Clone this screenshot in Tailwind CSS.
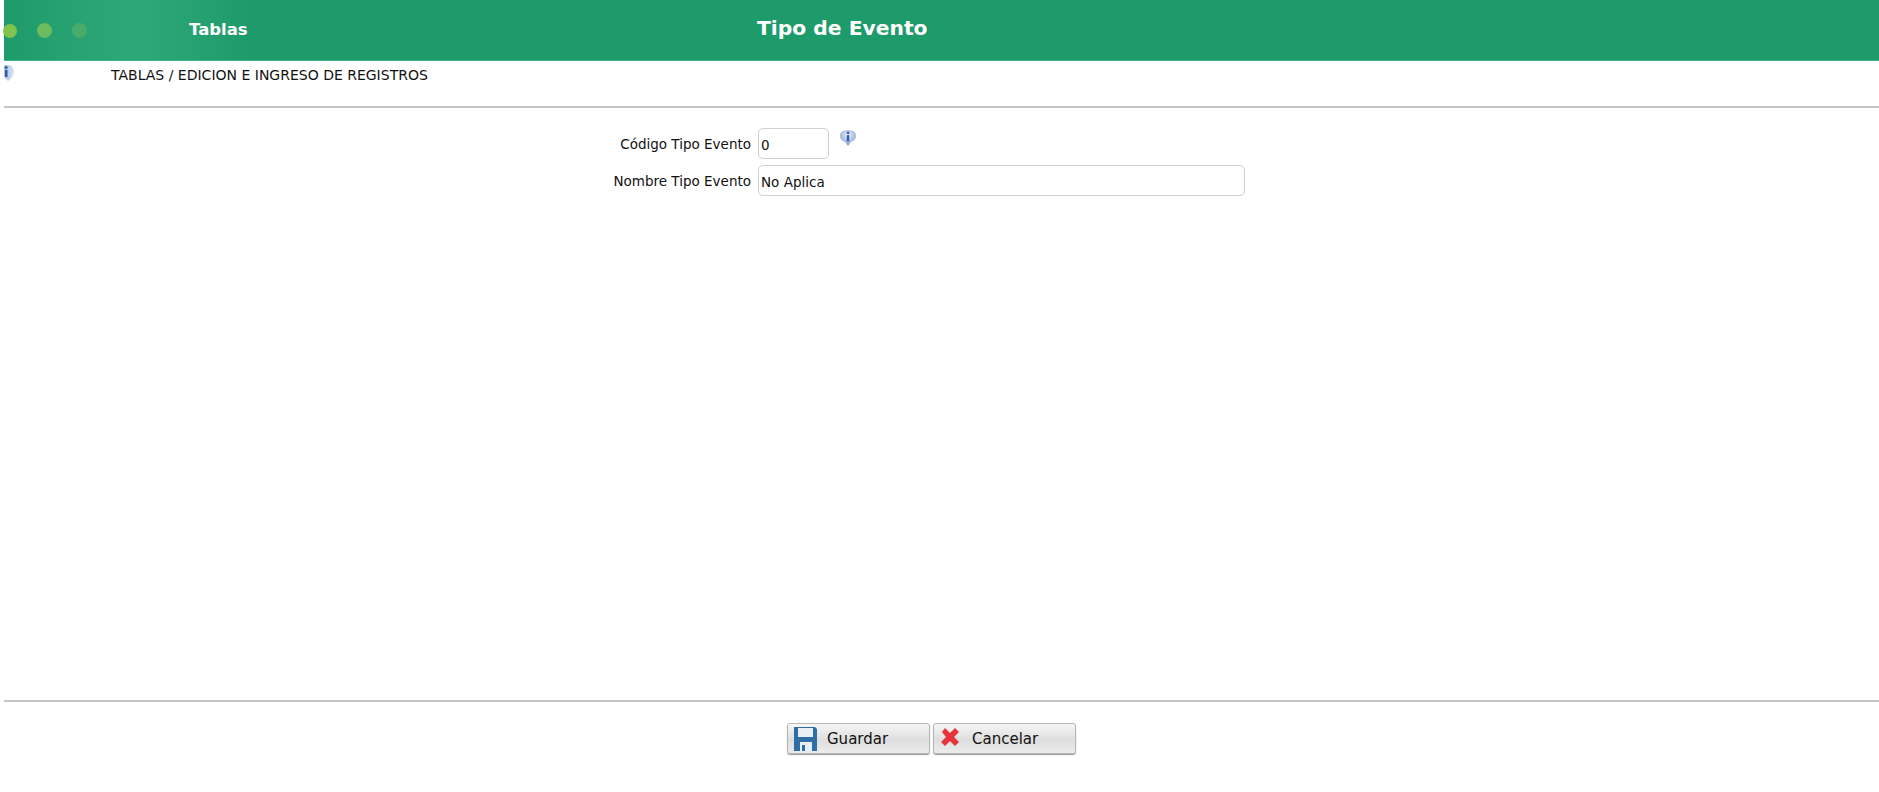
<!DOCTYPE html>
<html lang="es">
<head>
  <meta charset="UTF-8" />
  <title>Tipo de Evento</title>
  <script src="https://cdn.jsdelivr.net/npm/@tailwindcss/browser@4"></script>
</head>
<body class="bg-white h-[792px] overflow-hidden pl-[4px] font-['DejaVu_Sans',sans-serif] text-[#111]">

  <!-- Header -->
  <div class="h-[61px] flex items-center bg-[#1e9b6b] bg-gradient-to-r from-[#1e9b6b] via-[#2fa877] via-[7%] to-[#1e9b6b] to-[13%] text-white font-bold border-b border-[#3fb58a]">
    <div class="w-[186px] flex items-center gap-[20px] -ml-[1px] pt-[1px]">
      <span class="w-[14px] h-[14px] rounded-full bg-[#7fc24e]"></span>
      <span class="w-[15px] h-[15px] rounded-full bg-[#6cbb5e]"></span>
      <span class="w-[15px] h-[15px] rounded-full bg-[#48ac6c]"></span>
    </div>
    <div class="w-[568px] text-[16.5px]">Tablas</div>
    <div class="text-[20.3px] pb-[3px]">Tipo de Evento</div>
  </div>

  <!-- Breadcrumb -->
  <div class="h-[45px] flex items-start">
    <svg class="mt-[4px] w-[10px] h-[16px]" viewBox="0 0 10 16">
      <defs>
        <linearGradient id="crumb" x1="0" y1="0" x2="1" y2="0">
          <stop offset="0" stop-color="#a9c0e4"/>
          <stop offset="1" stop-color="#dbe5f4"/>
        </linearGradient>
      </defs>
      <path d="M0 0h5c4 1 5 4 5 7s-3 7-6 9l-2-2c-2-1-2-4-2-6z" fill="url(#crumb)"/>
      <rect x="1" y="5" width="2.5" height="7" fill="#2f5ca8"/>
      <circle cx="2.2" cy="2.5" r="1.5" fill="#2f5ca8"/>
    </svg>
    <div class="ml-[97px] mt-[4px] text-[14px] leading-[20px]">TABLAS / EDICION E INGRESO DE REGISTROS</div>
  </div>
  <div class="h-[2px] bg-[#c4c4c4]"></div>

  <!-- Form -->
  <div class="h-[592px] pt-[20px] flex flex-col gap-[6px]">
    <div class="flex items-center h-[31px]">
      <label class="w-[747px] text-right text-[13.5px] pt-[1px]">Código Tipo Evento</label>
      <input value="0" class="ml-[7px] w-[71px] h-[31px] px-[2px] pt-[3px] border border-[#cfcfcf] rounded-[5px] text-[13.5px] outline-none" />
      <svg class="ml-[10px] mb-[12px] w-[18px] h-[18px]" viewBox="0 0 18 18">
        <defs>
          <radialGradient id="info" cx="50%" cy="30%" r="70%">
            <stop offset="0" stop-color="#e8f0fa"/>
            <stop offset="1" stop-color="#7f9fd0"/>
          </radialGradient>
        </defs>
        <path d="M1 7c0-4 3-6 8-6s8 2 8 6c0 3-2 5-5 6l-3 4-3-4C3 12 1 10 1 7z" fill="url(#info)"/>
        <circle cx="9" cy="3.8" r="1.4" fill="#2f5ca8"/>
        <rect x="7.8" y="6.2" width="2.4" height="6.3" fill="#2f5ca8"/>
      </svg>
    </div>
    <div class="flex items-center h-[31px]">
      <label class="w-[747px] text-right text-[13.5px] pt-[1px]">Nombre Tipo Evento</label>
      <input value="No Aplica" class="ml-[7px] w-[487px] h-[31px] px-[2px] pt-[3px] border border-[#cfcfcf] rounded-[5px] text-[13.5px] outline-none" />
    </div>
  </div>
  <div class="h-[2px] bg-[#c4c4c4]"></div>

  <!-- Buttons -->
  <div class="pt-[21px] pl-[783px] flex gap-[3px]">
    <button class="w-[143px] h-[31px] flex items-center pl-[6px] rounded-[3px] border border-[#b5b5b5] shadow-[0_1px_1px_#999] bg-gradient-to-b from-[#f6f6f6] via-[#dedede] via-[55%] to-[#ececec] text-[15px]">
      <svg class="w-[23px] h-[24px]" viewBox="0 0 23 24">
        <path d="M0 0h21l2 2v22H0z" fill="#2f6ea5"/>
        <rect x="4" y="1" width="15" height="9" fill="#e8eef3"/>
        <rect x="6" y="15" width="12" height="9" fill="#e8eef3"/>
        <rect x="8" y="18" width="3" height="6" fill="#2f6ea5"/>
      </svg>
      <span class="ml-[10px] pt-[2px]">Guardar</span>
    </button>
    <button class="w-[143px] h-[31px] flex items-center pl-[6px] rounded-[3px] border border-[#b5b5b5] shadow-[0_1px_1px_#999] bg-gradient-to-b from-[#f6f6f6] via-[#dedede] via-[55%] to-[#ececec] text-[15px]">
      <svg class="w-[20px] h-[20px] mb-[4px]" viewBox="0 0 20 20">
        <path d="M2 5l3-4 5 5 5-5 4 4-5 5 5 5-4 4-5-5-5 5-4-4 5-5z" fill="#e8323c"/>
      </svg>
      <span class="ml-[12px] pt-[2px]">Cancelar</span>
    </button>
  </div>
</body>
</html>
